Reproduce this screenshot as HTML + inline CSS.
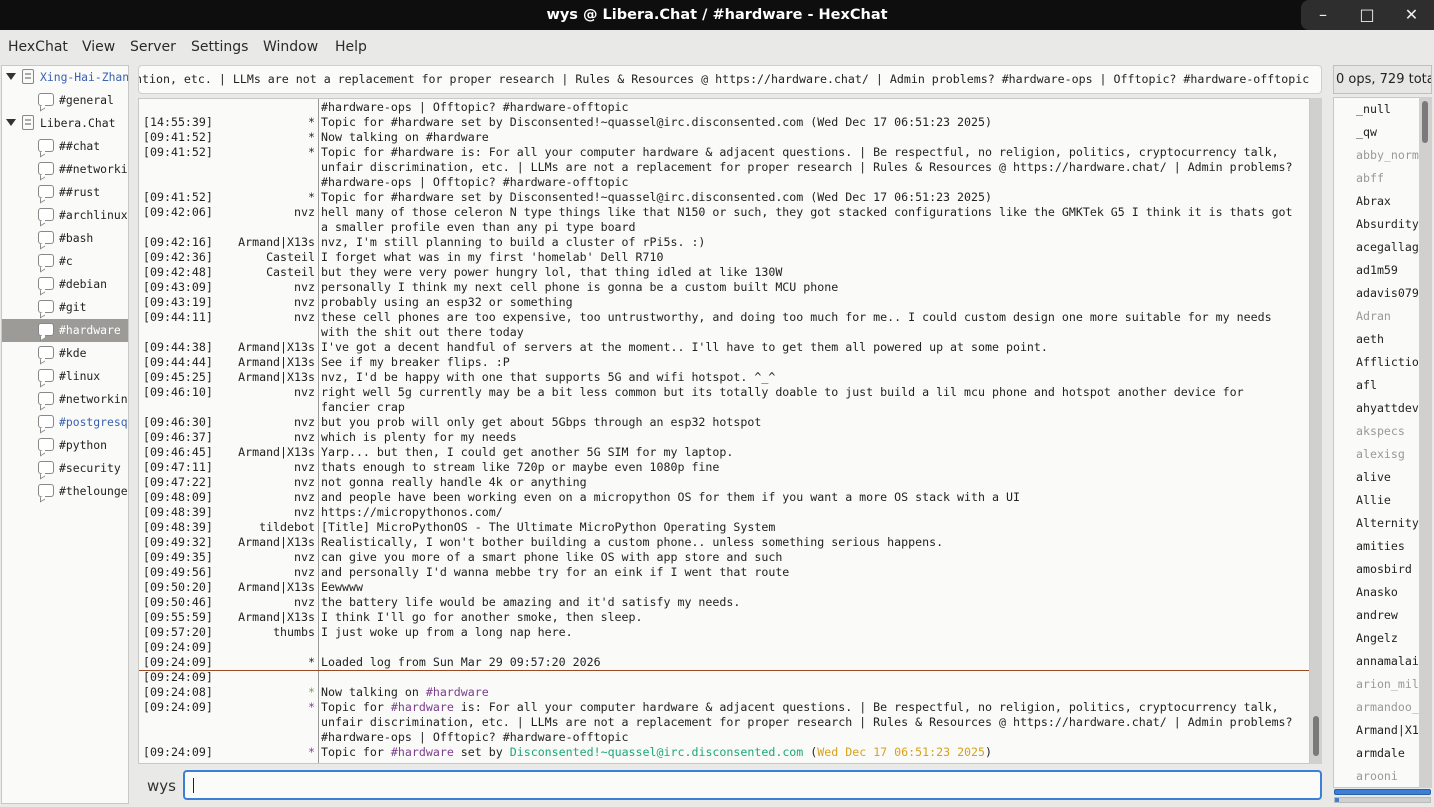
<!DOCTYPE html>
<html><head><meta charset="utf-8"><style>
*{margin:0;padding:0;box-sizing:border-box}
body{width:1434px;height:807px;overflow:hidden;background:#e9e9e8;font-family:"DejaVu Sans",sans-serif;position:relative}
.abs{position:absolute}
#title{left:0;top:0;width:1434px;height:30px;background:#0e0e0e;color:#fff;font-weight:bold;font-size:14.5px;text-align:center;line-height:30px}
.wb{top:0;width:44px;height:30px;background:#2e2e2e;color:#eee;text-align:center;line-height:30px;font-size:16px}
#menu{top:30px;left:0;width:1434px;height:32px;font-size:14px;color:#2a2a2a}
#menu span{position:absolute;top:9px}
#tree{left:1px;top:65px;width:128px;height:739px;background:#fafaf9;border:1px solid #c8c8c6;overflow:hidden;font-family:"DejaVu Sans Mono",monospace;font-size:11.4px;color:#222}
.ti{position:absolute;height:23px;line-height:23px;white-space:nowrap}
.bub{display:inline-block;position:relative;width:16px;height:13px;border:1.5px solid #888;border-radius:3px;vertical-align:-2px;margin-right:5px;background:#fff}
.bub:after{content:"";position:absolute;left:1px;bottom:-5px;width:4px;height:4px;border-left:1.5px solid #888;border-bottom:1.5px solid #888;background:#fff;transform:skewY(-30deg)}
.srv{display:inline-block;width:12px;height:15px;border:1.5px solid #888;border-radius:2px;vertical-align:-3px;margin-right:6px;background:linear-gradient(#aaa,#aaa) 2px 3px/6px 2px no-repeat,linear-gradient(#aaa,#aaa) 2px 7px/6px 2px no-repeat}
.tri{position:absolute;left:4px;width:0;height:0;border-left:5px solid transparent;border-right:5px solid transparent;border-top:7px solid #333}
#topic{left:138px;top:65px;width:1184px;height:29px;background:#fbfbfa;border:1px solid #cfcfcd;border-radius:4px;font-family:"DejaVu Sans Mono",monospace;font-size:11.62px;line-height:27px;white-space:pre;overflow:hidden;color:#222}
#topic span{position:absolute;left:-4px;top:0}
#chat{left:138px;top:98px;width:1172px;height:666px;background:#fafaf9;border:1px solid #c8c8c6;overflow:hidden;font-family:"DejaVu Sans Mono",monospace;font-size:11.62px;color:#222}
#sep{left:179px;top:0;width:1px;height:666px;background:#9a9a9a}
.r{position:absolute;left:0;width:1170px;height:15px;line-height:15px;white-space:pre}
.t{position:absolute;left:4px}
.n{position:absolute;right:994px;text-align:right}
.m{position:absolute;left:182px}
.p{color:#7b3e8c}.g{color:#6ea53a}.c{color:#1ba77a}.y{color:#d7a21b}
#vs{left:1310px;top:98px;width:12px;height:666px;background:#d0d0ce}
#vs div{position:absolute;left:3px;top:618px;width:6px;height:40px;background:#7a7a7a;border-radius:3px}
#inp{left:183px;top:770px;width:1139px;height:30px;border:2px solid #3d7fd6;border-radius:4px;background:#fbfbfa}
#inp div{position:absolute;left:8px;top:6px;width:1px;height:15px;background:#222}
#ops{left:1333px;top:65px;width:99px;height:29px;border:1px solid #c0c0be;font-size:13px;line-height:27px;padding-left:2px;white-space:nowrap;overflow:hidden;color:#222;background:#e6e6e5}
#ul{left:1333px;top:97px;width:99px;height:691px;background:#fafaf9;border:1px solid #c8c8c6;overflow:hidden;font-family:"DejaVu Sans Mono",monospace;font-size:11.6px}
.u{position:absolute;left:22px;height:23px;line-height:23px;white-space:nowrap;color:#222}
.a{color:#999}
#us{left:1419px;top:97px;width:13px;height:691px;background:#d0d0ce}
#us div{position:absolute;left:3px;top:4px;width:6px;height:42px;background:#7a7a7a;border-radius:3px}
</style></head><body>
<div id="title" class="abs">wys @ Libera.Chat / #hardware - HexChat</div>
<div class="abs wb" style="left:1301px;border-radius:8px 0 0 8px">&#8211;</div>
<div class="abs wb" style="left:1345px">&#9633;</div>
<div class="abs wb" style="left:1389px;width:45px">&#10005;</div>
<div id="menu" class="abs"><span style="left:8px">HexChat</span><span style="left:82px">View</span><span style="left:130px">Server</span><span style="left:191px">Settings</span><span style="left:263px">Window</span><span style="left:335px">Help</span></div>

<div id="tree" class="abs">
<div class="tri" style="top:7px"></div><div class="ti" style="left:20px;top:0;color:#3a62b0"><span class="srv"></span>Xing-Hai-Zhang</div>
<div class="ti" style="left:36px;top:23px"><span class="bub"></span>#general</div>
<div class="tri" style="top:53px"></div><div class="ti" style="left:20px;top:46px"><span class="srv"></span>Libera.Chat</div>
<div class="ti" style="left:36px;top:69px"><span class="bub"></span>##chat</div>
<div class="ti" style="left:36px;top:92px"><span class="bub"></span>##networking</div>
<div class="ti" style="left:36px;top:115px"><span class="bub"></span>##rust</div>
<div class="ti" style="left:36px;top:138px"><span class="bub"></span>#archlinux</div>
<div class="ti" style="left:36px;top:161px"><span class="bub"></span>#bash</div>
<div class="ti" style="left:36px;top:184px"><span class="bub"></span>#c</div>
<div class="ti" style="left:36px;top:207px"><span class="bub"></span>#debian</div>
<div class="ti" style="left:36px;top:230px"><span class="bub"></span>#git</div>
<div class="ti" style="left:0;top:253px;width:128px;background:#9c9b97;color:#fff;padding-left:36px"><span class="bub"></span>#hardware</div>
<div class="ti" style="left:36px;top:276px"><span class="bub"></span>#kde</div>
<div class="ti" style="left:36px;top:299px"><span class="bub"></span>#linux</div>
<div class="ti" style="left:36px;top:322px"><span class="bub"></span>#networking</div>
<div class="ti" style="left:36px;top:345px;color:#3a62b0"><span class="bub"></span>#postgresql</div>
<div class="ti" style="left:36px;top:368px"><span class="bub"></span>#python</div>
<div class="ti" style="left:36px;top:391px"><span class="bub"></span>#security</div>
<div class="ti" style="left:36px;top:414px"><span class="bub"></span>#thelounge</div>
</div>

<div id="topic" class="abs"><span>ntion, etc. | LLMs are not a replacement for proper research | Rules &amp; Resources @ https://hardware.chat/ | Admin problems? #hardware-ops | Offtopic? #hardware-offtopic</span></div>

<div id="chat" class="abs">
<div id="sep" class="abs"></div>
<div class="r" style="top:1px"><span class="m">#hardware-ops | Offtopic? #hardware-offtopic</span></div>
<div class="r" style="top:16px"><span class="t">[14:55:39]</span><span class="n">*</span><span class="m">Topic for #hardware set by Disconsented!~quassel@irc.disconsented.com (Wed Dec 17 06:51:23 2025)</span></div>
<div class="r" style="top:31px"><span class="t">[09:41:52]</span><span class="n">*</span><span class="m">Now talking on #hardware</span></div>
<div class="r" style="top:46px"><span class="t">[09:41:52]</span><span class="n">*</span><span class="m">Topic for #hardware is: For all your computer hardware &amp; adjacent questions. | Be respectful, no religion, politics, cryptocurrency talk,</span></div>
<div class="r" style="top:61px"><span class="m">unfair discrimination, etc. | LLMs are not a replacement for proper research | Rules &amp; Resources @ https://hardware.chat/ | Admin problems?</span></div>
<div class="r" style="top:76px"><span class="m">#hardware-ops | Offtopic? #hardware-offtopic</span></div>
<div class="r" style="top:91px"><span class="t">[09:41:52]</span><span class="n">*</span><span class="m">Topic for #hardware set by Disconsented!~quassel@irc.disconsented.com (Wed Dec 17 06:51:23 2025)</span></div>
<div class="r" style="top:106px"><span class="t">[09:42:06]</span><span class="n">nvz</span><span class="m">hell many of those celeron N type things like that N150 or such, they got stacked configurations like the GMKTek G5 I think it is thats got</span></div>
<div class="r" style="top:121px"><span class="m">a smaller profile even than any pi type board</span></div>
<div class="r" style="top:136px"><span class="t">[09:42:16]</span><span class="n">Armand|X13s</span><span class="m">nvz, I'm still planning to build a cluster of rPi5s. :)</span></div>
<div class="r" style="top:151px"><span class="t">[09:42:36]</span><span class="n">Casteil</span><span class="m">I forget what was in my first 'homelab' Dell R710</span></div>
<div class="r" style="top:166px"><span class="t">[09:42:48]</span><span class="n">Casteil</span><span class="m">but they were very power hungry lol, that thing idled at like 130W</span></div>
<div class="r" style="top:181px"><span class="t">[09:43:09]</span><span class="n">nvz</span><span class="m">personally I think my next cell phone is gonna be a custom built MCU phone</span></div>
<div class="r" style="top:196px"><span class="t">[09:43:19]</span><span class="n">nvz</span><span class="m">probably using an esp32 or something</span></div>
<div class="r" style="top:211px"><span class="t">[09:44:11]</span><span class="n">nvz</span><span class="m">these cell phones are too expensive, too untrustworthy, and doing too much for me.. I could custom design one more suitable for my needs</span></div>
<div class="r" style="top:226px"><span class="m">with the shit out there today</span></div>
<div class="r" style="top:241px"><span class="t">[09:44:38]</span><span class="n">Armand|X13s</span><span class="m">I've got a decent handful of servers at the moment.. I'll have to get them all powered up at some point.</span></div>
<div class="r" style="top:256px"><span class="t">[09:44:44]</span><span class="n">Armand|X13s</span><span class="m">See if my breaker flips. :P</span></div>
<div class="r" style="top:271px"><span class="t">[09:45:25]</span><span class="n">Armand|X13s</span><span class="m">nvz, I'd be happy with one that supports 5G and wifi hotspot. ^_^</span></div>
<div class="r" style="top:286px"><span class="t">[09:46:10]</span><span class="n">nvz</span><span class="m">right well 5g currently may be a bit less common but its totally doable to just build a lil mcu phone and hotspot another device for</span></div>
<div class="r" style="top:301px"><span class="m">fancier crap</span></div>
<div class="r" style="top:316px"><span class="t">[09:46:30]</span><span class="n">nvz</span><span class="m">but you prob will only get about 5Gbps through an esp32 hotspot</span></div>
<div class="r" style="top:331px"><span class="t">[09:46:37]</span><span class="n">nvz</span><span class="m">which is plenty for my needs</span></div>
<div class="r" style="top:346px"><span class="t">[09:46:45]</span><span class="n">Armand|X13s</span><span class="m">Yarp... but then, I could get another 5G SIM for my laptop.</span></div>
<div class="r" style="top:361px"><span class="t">[09:47:11]</span><span class="n">nvz</span><span class="m">thats enough to stream like 720p or maybe even 1080p fine</span></div>
<div class="r" style="top:376px"><span class="t">[09:47:22]</span><span class="n">nvz</span><span class="m">not gonna really handle 4k or anything</span></div>
<div class="r" style="top:391px"><span class="t">[09:48:09]</span><span class="n">nvz</span><span class="m">and people have been working even on a micropython OS for them if you want a more OS stack with a UI</span></div>
<div class="r" style="top:406px"><span class="t">[09:48:39]</span><span class="n">nvz</span><span class="m">https://micropythonos.com/</span></div>
<div class="r" style="top:421px"><span class="t">[09:48:39]</span><span class="n">tildebot</span><span class="m">[Title] MicroPythonOS - The Ultimate MicroPython Operating System</span></div>
<div class="r" style="top:436px"><span class="t">[09:49:32]</span><span class="n">Armand|X13s</span><span class="m">Realistically, I won't bother building a custom phone.. unless something serious happens.</span></div>
<div class="r" style="top:451px"><span class="t">[09:49:35]</span><span class="n">nvz</span><span class="m">can give you more of a smart phone like OS with app store and such</span></div>
<div class="r" style="top:466px"><span class="t">[09:49:56]</span><span class="n">nvz</span><span class="m">and personally I'd wanna mebbe try for an eink if I went that route</span></div>
<div class="r" style="top:481px"><span class="t">[09:50:20]</span><span class="n">Armand|X13s</span><span class="m">Eewwww</span></div>
<div class="r" style="top:496px"><span class="t">[09:50:46]</span><span class="n">nvz</span><span class="m">the battery life would be amazing and it'd satisfy my needs.</span></div>
<div class="r" style="top:511px"><span class="t">[09:55:59]</span><span class="n">Armand|X13s</span><span class="m">I think I'll go for another smoke, then sleep.</span></div>
<div class="r" style="top:526px"><span class="t">[09:57:20]</span><span class="n">thumbs</span><span class="m">I just woke up from a long nap here.</span></div>
<div class="r" style="top:541px"><span class="t">[09:24:09]</span></div>
<div class="r" style="top:556px"><span class="t">[09:24:09]</span><span class="n">*</span><span class="m">Loaded log from Sun Mar 29 09:57:20 2026</span></div>
<div class="abs" style="left:0;top:571px;width:1170px;height:1px;background:#9a4a22"></div>
<div class="r" style="top:571px"><span class="t">[09:24:09]</span></div>
<div class="r" style="top:586px"><span class="t">[09:24:08]</span><span class="n g">*</span><span class="m">Now talking on <span class="p">#hardware</span></span></div>
<div class="r" style="top:601px"><span class="t">[09:24:09]</span><span class="n p">*</span><span class="m">Topic for <span class="p">#hardware</span> is: For all your computer hardware &amp; adjacent questions. | Be respectful, no religion, politics, cryptocurrency talk,</span></div>
<div class="r" style="top:616px"><span class="m">unfair discrimination, etc. | LLMs are not a replacement for proper research | Rules &amp; Resources @ https://hardware.chat/ | Admin problems?</span></div>
<div class="r" style="top:631px"><span class="m">#hardware-ops | Offtopic? #hardware-offtopic</span></div>
<div class="r" style="top:646px"><span class="t">[09:24:09]</span><span class="n p">*</span><span class="m">Topic for <span class="p">#hardware</span> set by <span class="c">Disconsented!~quassel@irc.disconsented.com</span> (<span class="y">Wed Dec 17 06:51:23 2025</span>)</span></div>
</div>
<div id="vs" class="abs"><div></div></div>

<div class="abs" style="left:147px;top:777px;font-size:15px;color:#333">wys</div>
<div id="inp" class="abs"><div></div></div>

<div id="ops" class="abs">0 ops, 729 total</div>
<div id="ul" class="abs">
<div class="u" style="top:0">_null</div>
<div class="u" style="top:23px">_qw</div>
<div class="u a" style="top:46px">abby_normal</div>
<div class="u a" style="top:69px">abff</div>
<div class="u" style="top:92px">Abrax</div>
<div class="u" style="top:115px">Absurdity</div>
<div class="u" style="top:138px">acegallagher</div>
<div class="u" style="top:161px">ad1m59</div>
<div class="u" style="top:184px">adavis079</div>
<div class="u a" style="top:207px">Adran</div>
<div class="u" style="top:230px">aeth</div>
<div class="u" style="top:253px">Affliction</div>
<div class="u" style="top:276px">afl</div>
<div class="u" style="top:299px">ahyattdev</div>
<div class="u a" style="top:322px">akspecs</div>
<div class="u a" style="top:345px">alexisg</div>
<div class="u" style="top:368px">alive</div>
<div class="u" style="top:391px">Allie</div>
<div class="u" style="top:414px">Alternity</div>
<div class="u" style="top:437px">amities</div>
<div class="u" style="top:460px">amosbird</div>
<div class="u" style="top:483px">Anasko</div>
<div class="u" style="top:506px">andrew</div>
<div class="u" style="top:529px">Angelz</div>
<div class="u" style="top:552px">annamalai</div>
<div class="u a" style="top:575px">arion_mill</div>
<div class="u a" style="top:598px">armandoo_</div>
<div class="u" style="top:621px">Armand|X13s</div>
<div class="u" style="top:644px">armdale</div>
<div class="u a" style="top:667px">arooni</div>
</div>
<div id="us" class="abs"><div></div></div>
<div class="abs" style="left:1334px;top:789px;width:97px;height:6px;background:#3d7fd6;border:1px solid #2a5ea8;border-radius:2px"></div>
<div class="abs" style="left:1334px;top:797px;width:97px;height:6px;background:#d0d0ce;border:1px solid #bbb"></div>
<div class="abs" style="left:1335px;top:798px;width:4px;height:4px;background:#3d7fd6"></div>
</body></html>
